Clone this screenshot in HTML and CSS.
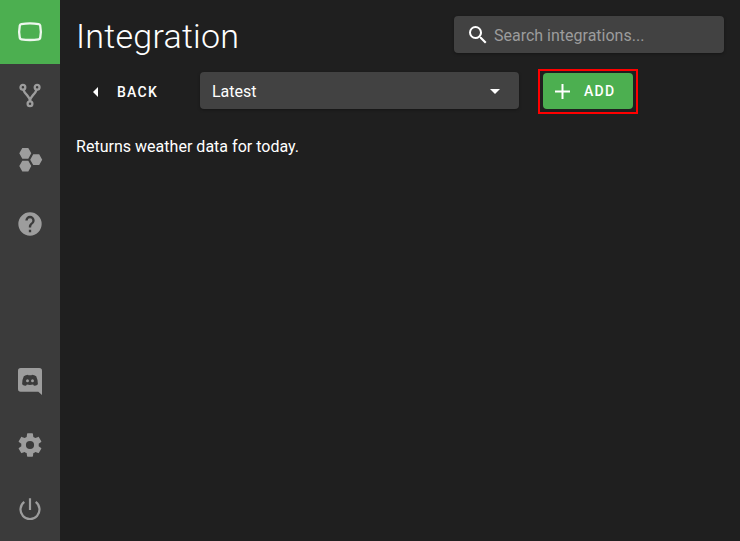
FILE: index.html
```
<!DOCTYPE html>
<html lang="en">
<head>
<meta charset="utf-8">
<title>Integration</title>
<link rel="stylesheet" href="styles.css">
</head>
<body>
<div class="app">
  <nav class="sidebar">
    <a class="nav-item active"><svg viewBox="0 0 28 28"><path class="line logo" d="M5.300 6.100Q14 4.700 22.700 6.100Q23.900 6.300 24.200 7.500Q25.500 13.700 24.200 19.900Q23.900 21.100 22.700 21.300Q14 22.700 5.300 21.300Q4.100 21.100 3.800 19.900Q2.500 13.700 3.800 7.500Q4.100 6.300 5.300 6.100Z"/></svg></a>
    <a class="nav-item"><svg viewBox="0 0 28 28"><g class="line branch"><circle cx="6.900" cy="5.200" r="2.400"/><circle cx="21.100" cy="5.200" r="2.400"/><circle cx="14" cy="21.700" r="2.400"/><path d="M7.300 7.600Q8 10 11.200 13.400Q14 16.400 14 19.300Q14 16.400 16.800 13.400Q20 10 20.700 7.600"/></g></svg></a>
    <a class="nav-item"><svg viewBox="0 0 28 28"><path d="M6.300 1.900h6l3 5.400-3 5.400h-6l-3-5.400zM6.300 14.700h6l3 5.400-3 5.400h-6l-3-5.400zM17.200 8.300h6l3 5.400-3 5.400h-6l-3-5.400z"/></svg></a>
    <a class="nav-item"><svg class="raised" viewBox="0 0 24 24"><path d="M15.070 11.250l-.900.920C13.450 12.890 13 13.500 13 15h-2v-.500c0-1.110.450-2.110 1.170-2.830l1.240-1.260c.370-.360.590-.860.590-1.410a2 2 0 0 0-4 0H8a4 4 0 0 1 8 0c0 .880-.360 1.670-.930 2.250M13 19h-2v-2h2M12 2a10 10 0 1 0 0 20 10 10 0 0 0 0-20z"/></svg></a>
    <a class="nav-item bottom"><svg class="raised" viewBox="0 0 28 28"><path fill-rule="evenodd" d="M4.700 1H23.300Q26 1 26 3.700V28L22.300 24.800H4.700Q2 24.800 2 22V3.700Q2 1 4.700 1ZM12 7.700Q9.600 7.800 7.800 9.300Q6 13 6.100 17.200Q7.600 18.800 10 18.800L10.900 17.600Q14 18.500 17.100 17.600L18 18.800Q20.400 18.800 21.900 17.200Q22 13 20.200 9.300Q18.400 7.800 16 7.700L15.600 8.300H12.400Z"/><ellipse cx="11.500" cy="13.800" rx="1.450" ry="1.550"/><ellipse cx="16.500" cy="13.800" rx="1.450" ry="1.550"/></svg></a>
    <a class="nav-item"><svg class="raised" viewBox="0 0 24 24"><path d="M12 15.500A3.500 3.500 0 0 1 8.500 12 3.500 3.500 0 0 1 12 8.500a3.500 3.500 0 0 1 3.500 3.500 3.500 3.500 0 0 1-3.500 3.500m7.430-2.530c.040-.320.070-.640.070-.970s-.030-.660-.070-1l2.110-1.630c.190-.150.240-.420.120-.640l-2-3.460c-.120-.220-.390-.310-.610-.220l-2.490 1c-.520-.390-1.060-.730-1.690-.980l-.370-2.650A.506.506 0 0 0 14 2h-4c-.250 0-.460.180-.500.420l-.370 2.650c-.630.250-1.170.590-1.690.980l-2.490-1c-.220-.090-.490 0-.610.220l-2 3.460c-.130.220-.070.490.120.640L4.570 11c-.040.340-.070.670-.070 1s.030.650.070.970l-2.110 1.660c-.190.150-.250.420-.120.640l2 3.460c.120.220.390.300.610.220l2.490-1.010c.520.400 1.060.740 1.690.990l.370 2.650c.040.240.250.420.500.420h4c.250 0 .460-.180.500-.420l.370-2.650c.630-.260 1.170-.590 1.690-.990l2.490 1.010c.220.080.490 0 .610-.220l2-3.460c.120-.220.070-.490-.120-.640z"/></svg></a>
    <a class="nav-item"><svg class="raised" viewBox="0 0 28 28"><path class="line power" d="M14 3.200V15M8.300 6.900A9.500 9.500 0 1 0 19.700 6.900"/></svg></a>
  </nav>
  <main class="content">
    <header class="header">
      <h1>Integration</h1>
      <label class="field search"><svg viewBox="0 0 24 24"><path d="M9.500 3A6.500 6.500 0 0 1 16 9.500c0 1.610-.590 3.090-1.560 4.230l.270.270h.790l5 5-1.500 1.500-5-5v-.790l-.270-.270A6.516 6.516 0 0 1 9.500 16a6.500 6.500 0 0 1 0-13m0 2C7 5 5 7 5 9.500S7 14 9.500 14 14 12 14 9.500 12 5 9.500 5z"/></svg><input type="text" placeholder="Search integrations..."></label>
    </header>
    <div class="toolbar">
      <button class="back"><svg viewBox="0 0 5 10"><path d="M5 0V10L0 5z"/></svg>BACK</button>
      <div class="field select"><span>Latest</span><svg viewBox="0 0 10 5"><path d="M0 0H10L5 5z"/></svg></div>
      <div class="highlight"><button class="add"><svg viewBox="0 0 15 15"><path d="M6.500 0h2v6.500H15v2H8.500V15h-2V8.500H0v-2h6.500z"/></svg>ADD</button></div>
    </div>
    <p class="description">Returns weather data for today.</p>
  </main>
</div>
</body>
</html>
```
FILE: styles.css
```
* { box-sizing: border-box; }
body {
  margin: 0;
  background: #1f1f1f;
  color: #fff;
  font: 16px/24px Roboto, sans-serif;
}
svg { display: block; fill: currentColor; flex: none; }
button { border: 0; padding: 0; color: inherit; font: 500 14px/20px Roboto, sans-serif; letter-spacing: 1.25px; }
.app { display: flex; height: 541px; }
.sidebar { width: 60px; display: flex; flex-direction: column; background: #3b3b3b; color: #9d9d9d; }
.nav-item { height: 64px; flex: none; display: flex; align-items: center; justify-content: center; }
.nav-item svg { width: 28px; height: 28px; }
.nav-item .raised { margin-bottom: 1px; }
.nav-item.active { background: #4caf50; color: #edf7ed; }
.nav-item.bottom { margin-top: auto; }
.line { fill: none; stroke: currentColor; }
.logo { stroke-width: 2.3; }
.branch { stroke-width: 2.3; }
.power { stroke-width: 2.2; }
.content { flex: 1; padding: 16px; }
.header { display: flex; justify-content: space-between; height: 37px; }
h1 { margin: 0; font-size: 34px; line-height: 40px; font-weight: 300; letter-spacing: 0.25px; }
.field {
  height: 37px;
  display: flex;
  align-items: center;
  border-radius: 4px;
  background: #424242;
  box-shadow: 0 1px 3px rgba(0, 0, 0, 0.35);
}
.search { width: 270px; padding-left: 12px; }
.search svg { width: 24px; height: 24px; }
.search input { flex: 1; min-width: 0; margin-left: 4px; padding: 2px 0 0; border: 0; outline: 0; background: none; color: inherit; font: 16px/24px Roboto, sans-serif; }
.search input::placeholder { color: #9c9c9c; opacity: 1; }
.toolbar { display: flex; align-items: flex-start; margin-top: 16px; height: 48px; padding-top: 3px; }
.back { display: flex; align-items: center; width: 124px; height: 40px; padding-left: 17px; background: none; }
.back svg { width: 5px; height: 10px; margin-right: 19px; }
.select { width: 319px; justify-content: space-between; padding: 0 19px 0 12px; }
.select span { padding-top: 2px; }
.select svg { width: 10px; height: 5px; margin-top: 1px; }
.highlight { width: 100px; height: 45px; margin: -3px 0 0 19px; border: 2px solid #f00; padding: 2px 3px; }
.add { display: flex; align-items: center; width: 90px; height: 36px; padding-left: 12px; border-radius: 4px; background: #4caf50; }
.add svg { width: 15px; height: 15px; margin-right: 14px; }
.description { margin: 18px 0 0; letter-spacing: 0.02px; }
```
